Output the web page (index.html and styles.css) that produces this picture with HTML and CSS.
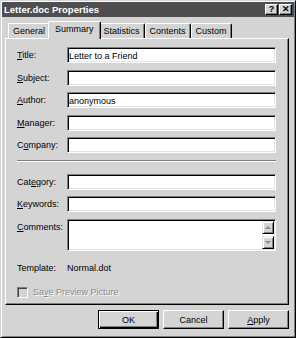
FILE: index.html
```html
<!DOCTYPE html>
<html lang="en">
<head>
    <meta charset="UTF-8">
    <title>Letter.doc Properties</title>
    <link rel="stylesheet" href="styles.css">
</head>
<body>
    <div class="window">
        <div class="titlebar">
            <span class="title">Letter.doc Properties</span>
            <div class="caption-btns">
                <span class="cbtn">?</span>
                <span class="cbtn">&#x2715;</span>
            </div>
        </div>

        <div class="tabs">
            <div class="tab">General</div>
            <div class="tab active">Summary</div>
            <div class="tab">Statistics</div>
            <div class="tab">Contents</div>
            <div class="tab">Custom</div>
        </div>

        <div class="panel">
            <div class="field"><label><u>T</u>itle:</label><div class="input">Letter to a Friend</div></div>
            <div class="field"><label><u>S</u>ubject:</label><div class="input"></div></div>
            <div class="field"><label><u>A</u>uthor:</label><div class="input">anonymous</div></div>
            <div class="field"><label><u>M</u>anager:</label><div class="input"></div></div>
            <div class="field"><label>C<u>o</u>mpany:</label><div class="input"></div></div>

            <div class="sep"></div>

            <div class="field"><label>Cat<u>e</u>gory:</label><div class="input"></div></div>
            <div class="field"><label><u>K</u>eywords:</label><div class="input"></div></div>
            <div class="field comments">
                <label><u>C</u>omments:</label>
                <div class="input textarea">
                    <div class="scroll">
                        <span class="sbtn up"></span>
                        <span class="sbtn down"></span>
                    </div>
                </div>
            </div>

            <div class="info"><span class="info-label">Template:</span><span>Normal.dot</span></div>

            <div class="check">
                <span class="box"></span>
                <span class="disabled">Sa<u>v</u>e Preview Picture</span>
            </div>
        </div>

        <div class="buttons">
            <button class="default">OK</button>
            <button>Cancel</button>
            <button><u>A</u>pply</button>
        </div>
    </div>
</body>
</html>
```

FILE: styles.css
```css
body {
    margin: 0;
}
.window {
    width: 296px;
    height: 338px;
    box-sizing: border-box;
    padding: 1px;
    background: #d4d4d4;
    border: 1px solid;
    border-color: #d4d4d4 #000 #000 #d4d4d4;
    box-shadow: inset 1px 1px #fff, inset -1px -1px #808080;
    font-family: "Liberation Sans", Arial, sans-serif;
    font-size: 9px;
    color: #000;
}
.titlebar {
    display: flex;
    align-items: center;
    justify-content: space-between;
    height: 15px;
    padding: 0 2px 0 2px;
    background: #4f4f4f;
    color: #fff;
}
.title {
    font-weight: bold;
    font-size: 9.5px;
}
.caption-btns {
    display: flex;
    gap: 1px;
}
.cbtn {
    width: 13px;
    height: 11px;
    box-sizing: border-box;
    background: #d4d4d4;
    border: 1px solid;
    border-color: #fff #000 #000 #fff;
    box-shadow: inset -1px -1px #808080;
    color: #000;
    font-weight: bold;
    font-size: 9px;
    line-height: 9px;
    text-align: center;
}

/* tabs */
.tabs {
    display: flex;
    align-items: flex-end;
    height: 21px;
    padding-left: 6px;
}
.tab {
    height: 14px;
    line-height: 14px;
    padding: 0 4px;
    border: 1px solid;
    border-bottom: none;
    border-color: #fff #000 #000 #fff;
    border-radius: 2px 2px 0 0;
    box-shadow: inset -1px 0 #808080;
}
.tab.active {
    position: relative;
    z-index: 1;
    height: 17px;
    line-height: 15px;
    margin: 0 -2px -1px;
    padding: 0 6px;
    background: #d4d4d4;
}

/* panel */
.panel {
    height: 267px;
    box-sizing: border-box;
    margin: 0 5px 0 3px;
    padding: 8px 12px 0 11px;
    border: 1px solid;
    border-color: #fff #000 #000 #fff;
    box-shadow: inset -1px -1px #808080;
}
.field {
    display: flex;
    align-items: center;
    height: 16px;
    margin-bottom: 6.5px;
}
.field label {
    width: 50px;
    flex-shrink: 0;
}
.input {
    flex: 1;
    height: 16px;
    box-sizing: border-box;
    padding-left: 1px;
    line-height: 14px;
    background: #fff;
    border: 1px solid;
    border-color: #808080 #fff #fff #808080;
    box-shadow: inset 1px 1px #000, inset -1px -1px #e4e4e4;
    padding-top: 1px;
}
.sep {
    border-top: 1px solid #808080;
    border-bottom: 1px solid #fff;
    margin: 5.5px 0 12px;
}
.field.comments {
    height: 32px;
    align-items: flex-start;
}
.comments label {
    padding-top: 3px;
}
.textarea {
    height: 32px;
    display: flex;
    justify-content: flex-end;
    padding: 1px 1px 1px 0;
}
.scroll {
    width: 12px;
    display: flex;
    flex-direction: column;
    justify-content: space-between;
}
.sbtn {
    height: 13px;
    box-sizing: border-box;
    background: #d4d4d4;
    border: 1px solid;
    border-color: #e4e4e4 #000 #000 #e4e4e4;
    box-shadow: inset 1px 1px #fff, inset -1px -1px #808080;
    display: flex;
    align-items: center;
    justify-content: center;
}
.sbtn::after {
    content: "";
    width: 0;
    height: 0;
    border-left: 3px solid transparent;
    border-right: 3px solid transparent;
}
.sbtn.up::after {
    border-bottom: 3px solid #8a8a8a;
}
.sbtn.down::after {
    border-top: 3px solid #8a8a8a;
}
.info {
    display: flex;
    margin-top: 11px;
    line-height: 13px;
}
.info-label {
    width: 50px;
}
.check {
    display: flex;
    align-items: center;
    gap: 5px;
    margin-top: 12px;
}
.box {
    width: 11px;
    height: 11px;
    box-sizing: border-box;
    background: #d4d4d4;
    border: 1px solid;
    border-color: #808080 #fff #fff #808080;
    box-shadow: inset 1px 1px #404040;
}
.disabled {
    color: #8a8a8a;
    text-shadow: 1px 1px #fff;
}

/* dialog buttons */
.buttons {
    display: flex;
    justify-content: flex-end;
    gap: 4px;
    margin-top: 5px;
    padding-right: 5px;
}
button {
    width: 61px;
    height: 19px;
    padding: 0;
    background: #d4d4d4;
    border: 1px solid;
    border-color: #fff #000 #000 #fff;
    box-shadow: inset -1px -1px #808080;
    font-family: "Liberation Sans", Arial, sans-serif;
    font-size: 9px;
    color: #000;
}
button.default {
    border-color: #000;
    box-shadow: inset 1px 1px #fff, inset -1px -1px #000, inset -2px -2px #808080;
}
```
